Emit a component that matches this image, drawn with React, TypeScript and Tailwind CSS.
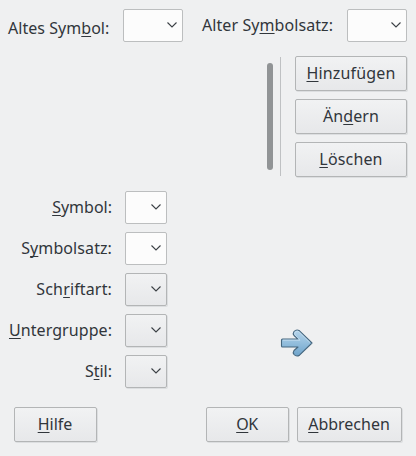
import React from "react";

type TextProps = { text: string; mark: number; tracking?: string };

/** Caption with its keyboard mnemonic underlined. */
function Caption({ text, mark, tracking = "" }: TextProps) {
  return (
    <span className={`whitespace-pre ${tracking}`}>
      {text.slice(0, mark)}
      <span className="underline decoration-[1px] underline-offset-[2px] [text-decoration-skip-ink:none]">
        {text[mark]}
      </span>
      {text.slice(mark + 1)}
    </span>
  );
}

function Chevron() {
  return (
    <svg width="12" height="8" viewBox="0 0 12 8" fill="none" stroke="#3b4045" strokeWidth="1.1">
      <path d="M1.5 1.5 6 6 10.5 1.5" />
    </svg>
  );
}

function Combo({ editable = false, wide = false }: { editable?: boolean; wide?: boolean }) {
  const width = wide ? "w-[60px]" : "w-[42px]";
  const look = editable
    ? "bg-[#fcfcfc] border-[#bcbebf]"
    : "bg-linear-to-b from-[#f1f2f3] to-[#e7e8ea] border-[#b3b5b6] shadow-[1px_1px_0_#dcdee0]";
  return (
    <button className={`flex h-[33px] shrink-0 items-center justify-end rounded-[2px] border pr-[4px] pb-[1px] ${width} ${look}`}>
      <Chevron />
    </button>
  );
}

function PushButton({ text, mark, tracking, size }: TextProps & { size: string }) {
  return (
    <button
      className={`flex h-[35px] items-start justify-center rounded-[2px] border border-[#b3b5b6] bg-linear-to-b from-[#f1f2f3] to-[#e7e8ea] pt-[5px] shadow-[1px_1px_0_#dcdee0] ${size}`}
    >
      <Caption text={text} mark={mark} tracking={tracking} />
    </button>
  );
}

function AssignArrow() {
  return (
    <svg width="34" height="30" viewBox="0 0 34 30">
      <defs>
        <linearGradient id="arrow" x1="0" y1="0" x2="0" y2="1">
          <stop offset="0" stopColor="#b5d4ea" />
          <stop offset="0.5" stopColor="#93bedd" />
          <stop offset="1" stopColor="#6ea3ca" />
        </linearGradient>
      </defs>
      <path
        d="M2.5 11H18L14 7.5Q12.5 5.5 14 3.5Q16.5 0.8 19.5 2.8L32 15 19.5 27.2Q16.5 29.2 14 26.5Q12.5 24.5 14 22.5L18 19H2.5Q1.5 19 1.5 18V12Q1.5 11 2.5 11Z"
        fill="url(#arrow)"
        stroke="#46677f"
        strokeWidth="1.1"
        strokeLinejoin="round"
      />
      <path d="M3 12.2H20L15 7Q14 5 15.5 4Q17.5 2.5 19 3.8L30 14.5" fill="none" stroke="#c9e0f0" strokeWidth="0.8" />
    </svg>
  );
}

const fields = [
  { text: "Symbol:", mark: 0, editable: true, tracking: "" },
  { text: "Symbolsatz:", mark: 1, editable: true, tracking: "tracking-[0.09px]" },
  { text: "Schriftart:", mark: 3, editable: false, tracking: "tracking-[0.15px]" },
  { text: "Untergruppe:", mark: 0, editable: false, tracking: "tracking-[0.07px]" },
  { text: "Stil:", mark: 1, editable: false, tracking: "" },
];

export default function App() {
  return (
    <div className="flex h-[456px] w-[416px] flex-col overflow-hidden bg-[#eff0f1] pt-[9px] font-['Noto_Sans',sans-serif] text-[16px] leading-[22px] text-[#31363b]">
      <div className="flex h-[33px] items-center pl-[8px]">
        <div className="w-[115px] pt-[5px]">
          <Caption text="Altes Symbol:" mark={9} tracking="tracking-[0.04px]" />
        </div>
        <Combo editable wide />
        <div className="w-[164px] pb-[1px] pl-[19px]">
          <Caption text="Alter Symbolsatz:" mark={8} tracking="tracking-[0.08px]" />
        </div>
        <Combo editable wide />
      </div>

      <div className="mt-[14px] flex h-[121px] justify-end pr-[9px]">
        <div className="mt-[7px] h-[107px] w-[6px] rounded-full bg-[#919496]" />
        <div className="mt-[1px] ml-[7px] h-[119px] w-px bg-[#bfc1c3]" />
        <div className="ml-[14px] flex flex-col gap-[8px]">
          <PushButton text="Hinzufügen" mark={0} tracking="tracking-[0.16px]" size="w-[112px]" />
          <PushButton text="Ändern" mark={2} tracking="tracking-[0.1px]" size="w-[112px]" />
          <PushButton text="Löschen" mark={0} tracking="tracking-[0.15px]" size="w-[112px]" />
        </div>
      </div>

      <div className="mt-[14px] flex">
        <div className="flex flex-col gap-[8px]">
          {fields.map((f) => (
            <div key={f.text} className="flex h-[33px] items-center">
              <div className="flex w-[125px] justify-end pr-[13px] pb-[1px]">
                <Caption text={f.text} mark={f.mark} tracking={f.tracking} />
              </div>
              <Combo editable={f.editable} />
            </div>
          ))}
        </div>
        <div className="mt-[137px] ml-[113px]">
          <AssignArrow />
        </div>
      </div>

      <div className="mt-[19px] flex pl-[14px]">
        <PushButton text="Hilfe" mark={0} size="w-[83px] pr-[1px]" />
        <PushButton text="OK" mark={0} tracking="tracking-[-0.4px]" size="ml-[109px] w-[83px] pr-[1px]" />
        <PushButton text="Abbrechen" mark={0} size="ml-[8px] w-[105px] pr-[1px]" />
      </div>
    </div>
  );
}
